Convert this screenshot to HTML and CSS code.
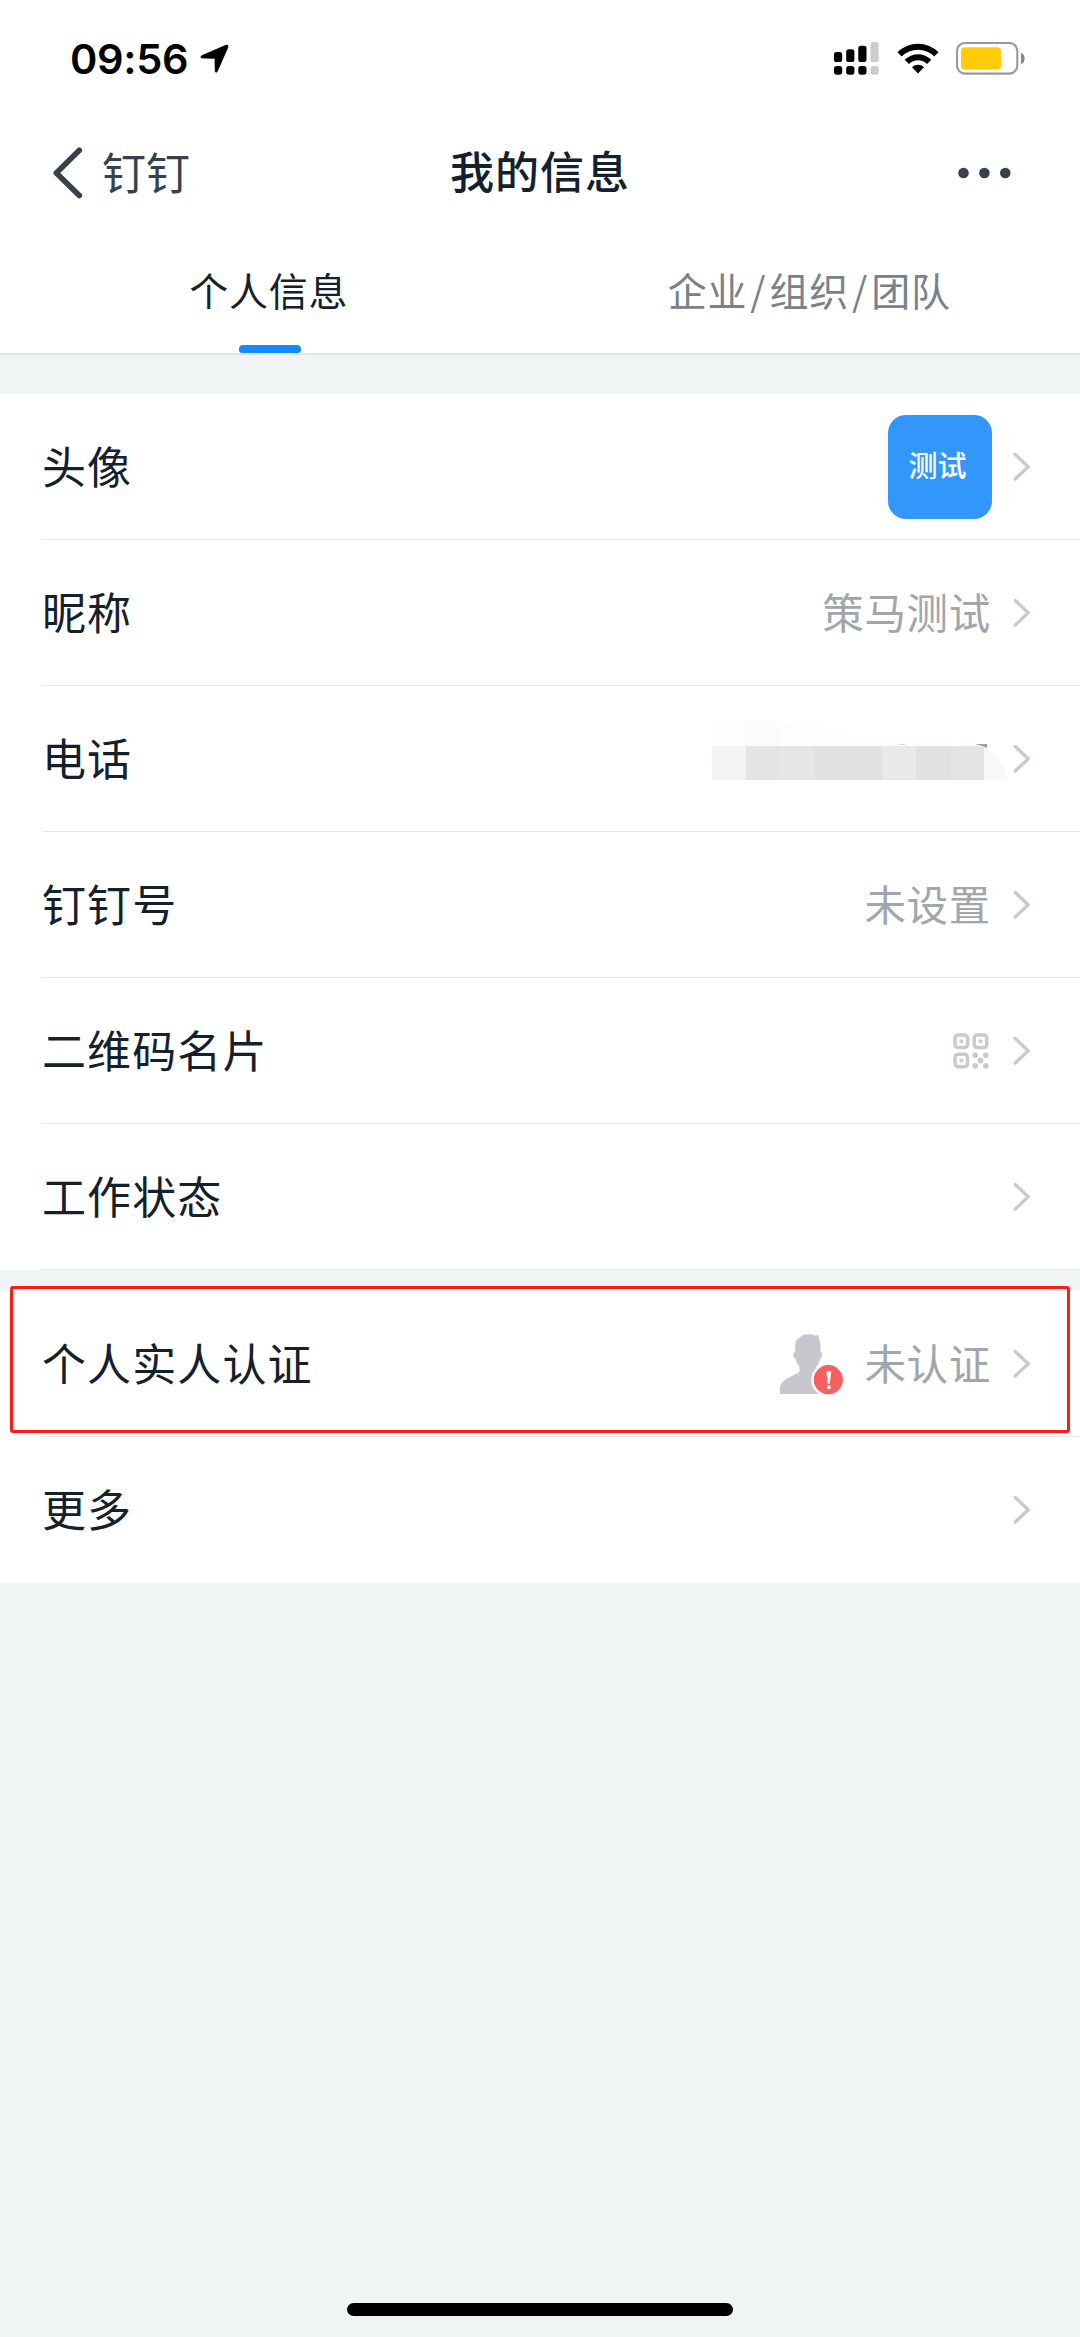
FILE: index.html
```html
<!DOCTYPE html>
<html lang="zh-CN">
<head>
<meta charset="utf-8">
<title>我的信息</title>
<link rel="stylesheet" href="styles.css">
</head>
<body>
<svg class="defs" width="0" height="0" aria-hidden="true">
  <symbol id="chevron" viewBox="0 0 18 30"><path d="M2.2 2.5 L15.2 14.8 L2.2 27.1" fill="none" stroke="#c7cad0" stroke-width="3.4" stroke-linecap="round" stroke-linejoin="round"/></symbol>
</svg>
<div class="screen">
  <header class="header">
    <div class="status-bar">
      <div class="status-left">
        <span class="time">09:56</span>
        <svg class="location" width="30" height="30" viewBox="0 0 30 30"><path stroke="#000" stroke-width=".8" stroke-linejoin="round" d="M1.6 11.8 L26 1.2 Q28.6 .4 27.9 3.2 L17.2 27.6 Q16.2 29 15.2 27.6 L15 15.2 Q15 14.4 14.2 14.3 L1.6 13.9 Q0 13 1.6 11.8Z"/></svg>
      </div>
      <div class="status-right">
        <svg width="45" height="33" viewBox="0 0 45 33">
          <rect x="0" y="10" width="8.2" height="10" rx="2.6"/><rect x="12.2" y="7.3" width="8.2" height="12.7" rx="2.6"/><rect x="24.3" y="3.8" width="8.2" height="16.2" rx="2.6"/>
          <rect x="0" y="24" width="8.2" height="8.8" rx="2.8"/><rect x="12.2" y="24" width="8.2" height="8.8" rx="2.8"/><rect x="24.3" y="24" width="8.2" height="8.8" rx="2.8"/>
          <g fill="#ccc"><rect x="36.5" y="0" width="8.2" height="20" rx="2.6"/><rect x="36.5" y="24" width="8.2" height="8.8" rx="2.8"/></g>
        </svg>
        <svg class="wifi" width="42" height="32" viewBox="0 0 42 32">
          <path d="M0.4 9.2 A29.3 29.3 0 0 1 41.6 9.2 L37.3 13.5 A23.2 23.2 0 0 0 4.7 13.5Z"/>
          <path d="M7.7 16.7 A18.9 18.9 0 0 1 34.3 16.7 L30 21 A12.8 12.8 0 0 0 12 21Z"/>
          <path d="M15 24.3 A8.6 8.6 0 0 1 27 24.3 L21 30.6Z"/>
        </svg>
        <svg class="battery" width="69" height="33" viewBox="0 0 69 33">
          <rect x="1" y="1" width="60.3" height="30.6" rx="8" fill="none" stroke="#999" stroke-width="2.1"/>
          <rect x="5" y="5.2" width="40" height="22.3" rx="4" fill="#ffcc0a"/>
          <path d="M65 10.7 Q68.6 12.3 68.6 16.5 Q68.6 20.7 65 22.3Z" fill="#858585"/>
        </svg>
      </div>
    </div>
    <nav class="nav">
      <a class="back">
        <svg width="30" height="52" viewBox="0 0 30 52"><path d="M26.3 3.3 L3.3 25.9 L26.3 48.5" fill="none" stroke="#35424e" stroke-width="5.6" stroke-linecap="round" stroke-linejoin="round"/></svg>
        <span>钉钉</span>
      </a>
      <h1 class="title">我的信息</h1>
      <svg class="dots" width="53" height="12" viewBox="0 0 53 12" fill="#35424e"><circle cx="5.5" cy="6" r="5.3"/><circle cx="26.4" cy="6" r="5.3"/><circle cx="47.3" cy="6" r="5.3"/></svg>
    </nav>
    <div class="tabs">
      <div class="tab active"><span>个人信息</span></div>
      <div class="tab"><span>企业<i>/</i>组织<i>/</i>团队</span></div>
    </div>
  </header>

  <section class="group">
    <div class="row"><span class="label">头像</span><span class="avatar">测试</span><svg class="chevron"><use href="#chevron"/></svg></div>
    <div class="row"><span class="label">昵称</span><span class="value">策马测试</span><svg class="chevron"><use href="#chevron"/></svg></div>
    <div class="row"><span class="label">电话</span>
      <svg class="mosaic" width="296" height="60" viewBox="0 0 296 60">
        <path d="M0 5 Q30 0 68 1 V26 H0Z" fill="#fdfdfd"/><path d="M34 0 H58 L68 2 V26 H34Z" fill="#fbfbfb"/>
        <path d="M68 3 L102 4 L160 22 H236 L262 26 H68Z" fill="#fdfdfd"/>
        <path d="M186 24 Q190 21.5 194 24Z" fill="#d5d7da"/><path d="M263 23 H275 V27 Q268 24 263 23Z" fill="#9b9fa4"/>
        <g shape-rendering="crispEdges">
          <rect y="25" width="34" height="34" fill="#f1f3f5"/><rect x="34" y="25" width="34" height="34" fill="#e3e4e6"/><rect x="68" y="25" width="34" height="34" fill="#e5e6e8"/><rect x="102" y="25" width="68" height="34" fill="#e1e2e4"/><rect x="170" y="25" width="34" height="34" fill="#e8e9eb"/><rect x="204" y="25" width="34" height="34" fill="#e1e2e4"/><rect x="238" y="25" width="34" height="34" fill="#e3e4e6"/>
        </g>
        <path d="M272 26 Q292 36 295 59 H272Z" fill="#f7f9f9"/>
      </svg>
      <svg class="chevron"><use href="#chevron"/></svg></div>
    <div class="row"><span class="label">钉钉号</span><span class="value">未设置</span><svg class="chevron"><use href="#chevron"/></svg></div>
    <div class="row"><span class="label">二维码名片</span>
      <svg class="qr" width="36" height="36" viewBox="0 0 36 36" fill="#c7cad0">
        <g fill="none" stroke="#c7cad0" stroke-width="3.5"><rect x="2" y="2" width="12.6" height="12.6" rx="3.2"/><rect x="21.2" y="2" width="12.6" height="12.6" rx="3.2"/><rect x="2" y="21.2" width="12.6" height="12.6" rx="3.2"/></g>
        <rect x="6.5" y="6.5" width="3.6" height="3.6" rx=".7"/><rect x="25.7" y="6.5" width="3.6" height="3.6" rx=".7"/><rect x="6.5" y="25.7" width="3.6" height="3.6" rx=".7"/>
        <circle cx="22.3" cy="22.3" r="2.8"/><circle cx="32.8" cy="22.3" r="2.8"/><circle cx="27.5" cy="27.5" r="2.9"/><circle cx="22.3" cy="32.8" r="2.8"/><circle cx="32.8" cy="32.8" r="2.8"/>
      </svg>
      <svg class="chevron"><use href="#chevron"/></svg></div>
    <div class="row"><span class="label">工作状态</span><svg class="chevron"><use href="#chevron"/></svg></div>
  </section>

  <section class="group">
    <div class="row highlighted"><span class="label">个人实人认证</span>
      <svg class="person" width="64" height="62" viewBox="0 0 64 62">
        <path d="M0 61 V56 C0 45 16 43 19.5 38.5 V33.5 C17 31.5 16 28 15.6 25.8 C13.8 25.5 12.8 22 13.4 20.2 C13.8 19.2 14.6 19 15.3 19 C14.6 11 15.5 5.8 20 4.6 C22 1 30 .5 34.5 2.6 C36 2.8 37.5 2.4 38.8 1.6 C38 3.4 38.5 5 39.5 7 C40.8 10.5 40.5 15 40.4 19 C42 19 42.6 20.5 42 22.6 C41.5 25 41 26 39.9 26 C39.3 29.5 38 32 36 34 V38.5 C39 43 54 45 54 56 V61Z" fill="#c7c6cc"/>
        <circle cx="48.3" cy="46.7" r="17" fill="#fff"/><circle cx="48.3" cy="46.7" r="14.6" fill="#f85f60"/>
        <path d="M46.4 39.2 Q48.8 36.4 51.2 39.2 L49.8 50.3 Q48.8 51.7 47.8 50.3Z" fill="#fff"/><circle cx="48.8" cy="54.3" r="2" fill="#fff"/>
      </svg>
      <span class="value">未认证</span><svg class="chevron"><use href="#chevron"/></svg></div>
    <div class="row"><span class="label">更多</span><svg class="chevron"><use href="#chevron"/></svg></div>
  </section>
  <footer class="home"><div class="home-bar"></div></footer>
</div>
</body>
</html>
```
FILE: styles.css
```css
*, *::before, *::after { box-sizing: border-box; }
body {
  margin: 0;
  background: #f0f4f5;
  color: #14212d;
  font-family: "Noto Sans CJK SC", sans-serif;
}
svg { display: block; flex: none; }
.defs { position: absolute; }
.screen {
  width: 1080px;
  height: 2337px;
  display: flex;
  flex-direction: column;
}
.header {
  height: 355px;
  background: #fff;
  border-bottom: 2px solid #e2e4e6;
  margin-bottom: 39px;
}
.status-bar {
  height: 117px;
  padding: 0 55px 0 70px;
  display: flex;
  justify-content: space-between;
  align-items: center;
}
.status-left, .status-right { display: flex; align-items: center; }
.time {
  width: 130px;
  font: 600 41.5px/50px Inter, sans-serif;
  letter-spacing: -.3px;
  padding-top: 1px;
  color: #000;
}
.wifi { margin-left: 18px; }
.battery { margin-left: 17px; }
.nav {
  height: 112px;
  padding: 0 69px 0 53px;
  display: grid;
  grid-template-columns: 1fr auto 1fr;
  align-items: center;
  line-height: 60px;
}
.back {
  display: flex;
  align-items: center;
  gap: 19px;
  font-size: 44px;
  color: #35424e;
}
.back span { padding-bottom: 5px; }
.title {
  margin: 0;
  padding: 0 0 6px 16px;
  font-size: 44px;
  font-weight: 500;
  letter-spacing: 1px;
}
.dots { justify-self: end; }
.tabs {
  height: 124px;
  padding-right: 1px;
  display: grid;
  grid-template-columns: 1fr 1fr;
}
.tab {
  display: flex;
  flex-direction: column;
  align-items: center;
  justify-content: space-between;
  padding-top: 31px;
  font-size: 39px;
  line-height: 58px;
  letter-spacing: .8px;
  color: #78828a;
}
.tab i { font-style: normal; padding: 0 3px; }
.active { color: #14212d; }
.active span { margin-right: 2px; }
.active::after {
  content: "";
  width: 62px;
  height: 8px;
  border-radius: 4px 4px 3px 3px;
  background: #148aff;
}
.group { background: #fff; }
.group + .group { margin-top: 21px; }
.row {
  position: relative;
  height: 146px;
  margin-left: 42px;
  padding-right: 49px;
  display: flex;
  align-items: center;
  border-bottom: 1px solid #e4e6e8;
}
.group + .group .row:last-child { border-bottom-color: transparent; }
.label {
  margin-right: auto;
  padding-bottom: 4px;
  font-size: 44px;
  line-height: 60px;
  letter-spacing: 1.1px;
}
.value {
  margin-right: -2px;
  padding-bottom: 4px;
  font-size: 41.5px;
  line-height: 60px;
  letter-spacing: .7px;
  color: #a0a6ac;
}
.chevron { width: 18px; height: 30px; margin-left: 24px; }
.avatar {
  width: 104px;
  height: 104px;
  border-radius: 18px;
  margin-right: -3px;
  padding-right: 5px;
  background: #3296fa;
  color: #fff;
  font-size: 29px;
  font-weight: 500;
  line-height: 98px;
  text-align: center;
}
.mosaic { margin: 0 -19px 15px 0; }
.person { margin-right: 20px; }
.highlighted::before {
  content: "";
  position: absolute;
  left: -32px;
  top: -5px;
  width: 1060px;
  height: 147px;
  border: 3px solid #ff1d12;
  border-radius: 3px;
}
.home {
  margin-top: auto;
  padding-bottom: 21px;
  display: flex;
  justify-content: center;
}
.home-bar {
  width: 386px;
  height: 13px;
  border-radius: 7px;
  background: #000;
}
```
